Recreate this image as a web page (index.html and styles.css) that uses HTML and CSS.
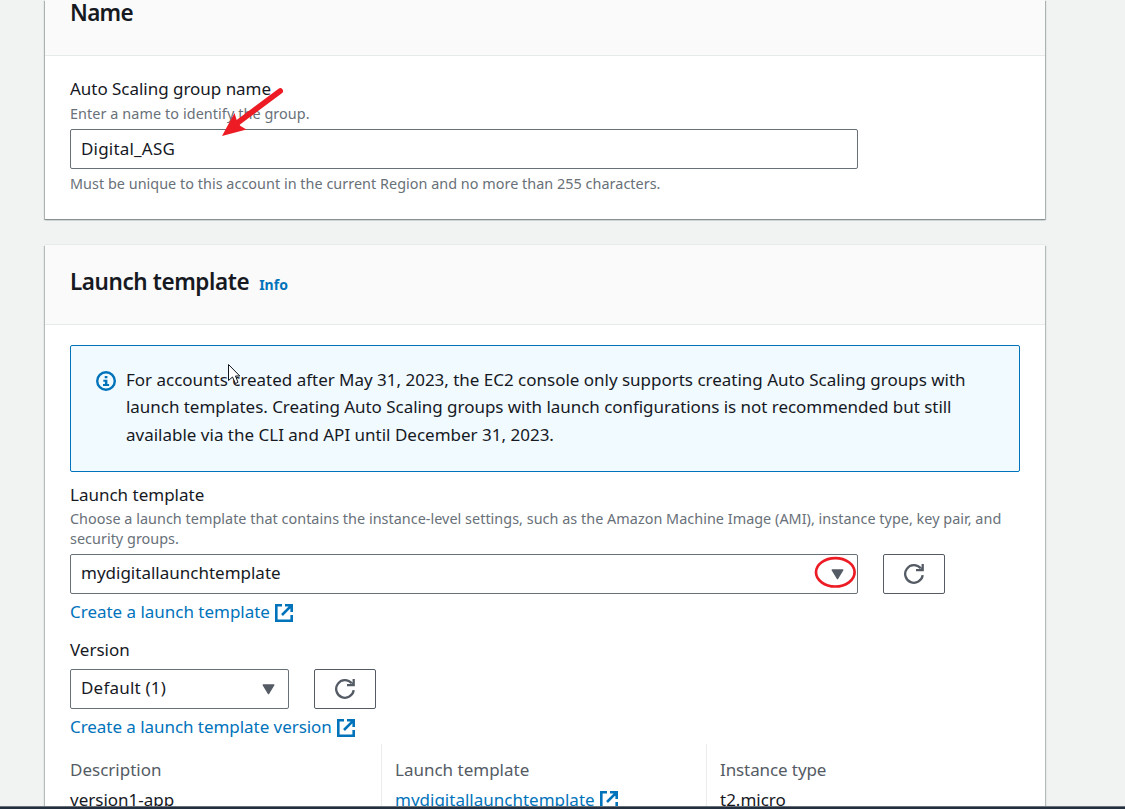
FILE: index.html
```html
<!DOCTYPE html>
<html lang="en">
<head>
<meta charset="utf-8">
<title>Create Auto Scaling group</title>
<link rel="stylesheet" href="styles.css">
</head>
<body>
<svg class="sprite" aria-hidden="true">
  <symbol id="external" viewBox="0 0 18 18"><path d="M7 1.300H1.300v15.400h15.400V11M10 1.300h6.700V8M16.300 1.700 7 11" fill="none" stroke="currentColor" stroke-width="2.600"/></symbol>
  <symbol id="refresh" viewBox="0 0 20 20"><path d="M18.700 11.200A8.800 8.800 0 1 1 16.700 4.300M18.700 0v6.200H12" fill="none" stroke="currentColor" stroke-width="2.300"/><path d="M14 6.500 18.800 3v3.500z" fill="currentColor"/></symbol>
  <symbol id="caret" viewBox="0 0 13 11"><path d="M1.200 1h10.600L6.500 9.600z" fill="currentColor" stroke="currentColor" stroke-width="1.400" stroke-linejoin="round"/></symbol>
</svg>
<main class="page">
  <section class="card card-name">
    <header class="card-header header-name"><h2 class="title t-name">Name</h2></header>
    <div class="card-body">
      <label class="label t-group">Auto Scaling group name</label>
      <p class="hint t-enter">Enter a name to identify the group.</p>
      <div class="field field-wide field-input"><span class="t-digital">Digital_ASG</span></div>
      <p class="hint hint-after">Must be unique to this account in the current Region and no more than 255 characters.</p>
    </div>
  </section>
  <section class="card card-template">
    <header class="card-header header-template"><h2 class="title t-launch">Launch template</h2><a class="info">Info</a></header>
    <div class="card-body body-template">
      <div class="alert">
        <svg class="alert-icon" viewBox="0 0 20 20"><circle cx="10" cy="10" r="8.800" fill="none" stroke="currentColor" stroke-width="2.400"/><path d="M8.700 5h2.700v2.200H8.700zM7.300 8.700h4.100v4.200h1.700v2H7v-2h1.900v-2.200H7.300z" fill="currentColor"/></svg>
        <p class="alert-text"><span class="t-a1">For accounts created after May 31, 2023, the EC2 console only supports creating Auto Scaling groups with</span><span class="t-a2">launch templates. Creating Auto Scaling groups with launch configurations is not recommended but still</span><span class="t-a3">available via the CLI and API until December 31, 2023.</span></p>
      </div>
      <label class="label label-template">Launch template</label>
      <p class="hint hint-template"><span>Choose a launch template that contains the instance-level settings, such as the Amazon Machine Image (AMI), instance type, key pair, and</span><span>security groups.</span></p>
      <div class="row">
        <div class="field field-wide select"><span>mydigitallaunchtemplate</span><svg class="caret"><use href="#caret"/></svg></div>
        <div class="button"><svg class="refresh"><use href="#refresh"/></svg></div>
      </div>
      <a class="link"><span class="t-create">Create a launch template</span><svg class="external"><use href="#external"/></svg></a>
      <label class="label label-version">Version</label>
      <div class="row">
        <div class="field field-small select"><span class="t-default">Default (1)</span><svg class="caret"><use href="#caret"/></svg></div>
        <div class="button"><svg class="refresh"><use href="#refresh"/></svg></div>
      </div>
      <a class="link"><span class="t-createv">Create a launch template version</span><svg class="external"><use href="#external"/></svg></a>
      <div class="details">
        <div class="detail"><span class="detail-key">Description</span><span class="detail-value">version1-app</span></div>
        <div class="detail"><span class="detail-key">Launch template</span><a class="detail-value detail-link"><span>mydigitallaunchtemplate</span><svg class="external"><use href="#external"/></svg></a></div>
        <div class="detail"><span class="detail-key t-inst">Instance type</span><span class="detail-value">t2.micro</span></div>
      </div>
    </div>
  </section>
</main>
<footer class="footer"></footer>
<svg class="overlay" viewBox="0 0 1125 809">
  <path d="M280.200 91 236 124" stroke="#ed1c24" stroke-width="5.600" stroke-linecap="round"/>
  <path d="M222 136 234.500 113 237 121 240.500 126 246.500 129.500Z" fill="#ed1c24"/>
  <ellipse cx="835.300" cy="572.300" rx="19.300" ry="14.200" fill="none" stroke="#ed1c24" stroke-width="2.700"/>
  <path d="M228.500 364.500V380.500L232.500 377L235.500 383.500L238 382.300L235.500 376H239.800Z" fill="#fff" stroke="#111820"/>
</svg>
</body>
</html>
```
FILE: styles.css
```css
* { box-sizing: border-box; }
body { margin: 0; width: 1125px; height: 809px; overflow: hidden; background: #f1f3f3; color: #16191f; font: 17px/28px "Noto Sans", sans-serif; }
h2, p { margin: 0; }
.sprite { display: none; }
.page { height: 806px; overflow: hidden; padding: 0 80px 0 45px; }
.card { background: #fff; box-shadow: 0 -1px 0 #e6eaea, 1px 1px 1px #00190f40, -1px 1px 1px #00190f40; }
.card-name { height: 219px; box-shadow: 0 1px 0 #879193, 0 1px 1px #001c244d, 1px 1px 1px #00190f40, -1px 1px 1px #00190f40; }
.card-template { margin-top: 26px; height: 590px; }
.card-header { display: flex; background: #fafafa; border-bottom: 1px solid #e6eaea; padding-left: 25px; }
.header-name { height: 56px; }
.header-template { height: 80px; padding-top: 21px; }
.title { font-size: 22.5px; line-height: 32px; font-weight: 600; white-space: nowrap; letter-spacing: -0.42px; }
.t-name { margin-top: -3px; letter-spacing: -0.7px; }
.info { margin: 5px 0 0 10px; font-size: 14px; line-height: 28px; font-weight: 700; color: #0073bb; }
.card-body { padding: 19px 25px 0; }
.body-template { padding-top: 20px; }
.label { display: block; line-height: 28px; white-space: nowrap; }
.t-group { letter-spacing: -0.03px; }
.hint { font-size: 14.4px; line-height: 20px; color: #687078; white-space: nowrap; letter-spacing: 0.03px; }
.t-enter { margin: 1px 0 5px; letter-spacing: 0.08px; }
.hint-after { margin-top: 5px; }
.row { display: flex; gap: 25px; }
.field { display: flex; align-items: center; height: 40px; padding: 0 13px 2px 10px; border: 1px solid #687078; border-radius: 2px; background: #fff; white-space: nowrap; }
.field-input { padding-bottom: 0; }
.field-wide { width: 788px; }
.field-small { width: 219px; }
.t-digital, .t-default { letter-spacing: 0.2px; }
.select { justify-content: space-between; padding-right: 13.5px; }
.caret { width: 13px; height: 11px; margin-top: 2px; color: #545b64; }
.button { display: flex; align-items: center; justify-content: center; width: 62px; height: 40px; border: 1px solid #545b64; border-radius: 2px; color: #545b64; }
.refresh { width: 20px; height: 20px; }
.alert { display: flex; gap: 10px; height: 127px; padding: 20px 25px; border: 1px solid #0073bb; border-radius: 2px; background: #f1faff; }
.alert-icon { width: 20px; height: 20px; margin-top: 5px; color: #0073bb; }
.alert-text { line-height: 28px; white-space: nowrap; }
.alert-text span, .hint-template span { display: block; }
.alert-text .t-a1 { line-height: 27px; letter-spacing: -0.015px; }
.t-a2 { letter-spacing: -0.04px; }
.label-template { margin-top: 9px; }
.hint-template { margin-bottom: 5px; }
.link { display: flex; align-items: center; gap: 5px; height: 28px; margin-top: 4px; color: #0073bb; white-space: nowrap; }
.t-create { letter-spacing: -0.02px; }
.t-createv { letter-spacing: -0.05px; }
.external { width: 18px; height: 18px; margin-top: 2px; color: #0073bb; }
.label-version { margin: 10px 0 5px; }
.details { display: flex; margin-top: 3px; }
.detail { display: flex; flex: none; flex-direction: column; height: 70px; width: 325px; padding: 12px 0 0 13px; border-left: 1px solid #eaeded; white-space: nowrap; }
.detail:first-child { width: 311px; padding-left: 0; border-left: 0; }
.detail:last-child { width: 300px; }
.detail-key { color: #545b64; }
.t-inst { letter-spacing: -0.1px; }
.detail-value { margin-top: 2px; }
.detail-link { display: flex; align-items: center; gap: 5px; color: #0073bb; }
.detail-link .external { margin-top: 0; }
.footer { height: 3px; background: #232f3e; border-top: 1px solid #687078; }
.overlay { position: absolute; inset: 0; width: 1125px; height: 809px; pointer-events: none; }
```
